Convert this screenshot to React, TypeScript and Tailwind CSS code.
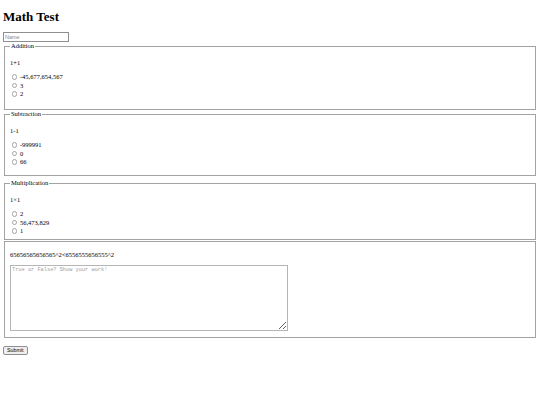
import React from 'react'

type Question = {
    legend: string
    prompt: string
    options: string[]
    box: string
}

const questions: Question[] = [
    { legend: 'Addition', prompt: '1+1', options: ['-45,677,654,567', '3', '2'], box: 'h-[68px]' },
    { legend: 'Subtraction', prompt: '1-1', options: ['-999991', '0', '66'], box: 'h-[66px]' },
    { legend: 'Multiplication', prompt: '1×1', options: ['2', '56,473,829', '1'], box: 'mt-[3px]' },
]

const QuestionBox = ({ q, idx }: { q: Question; idx: number }) => (
    <fieldset className={`mx-[1px] border border-[#a3a3a3] px-[5px] pt-[2.3px] pb-[4px] ${q.box}`}>
        <legend className='px-[1px] leading-[7.5px]'>{q.legend}</legend>
        <p className='my-[6.5px] leading-[7.5px]'>{q.prompt}</p>
        {q.options.map((opt) => (
            <label key={opt} className='flex h-[8.5px] items-center leading-[7.5px]'>
                <input
                    type='radio'
                    name={`q${idx}`}
                    className='ml-[2px] mr-[2.5px] h-[5.4px] w-[5.4px] appearance-none rounded-full border border-[#a5a5a5] bg-white'
                />
                <span>{opt}</span>
            </label>
        ))}
    </fieldset>
)

const App = () => {
    return (
        <div className="min-h-[405px] bg-white px-[3px] font-['Liberation_Serif',serif] text-[6.5px] text-black">
            <h1 className='my-[8.7px] text-[13px] font-bold leading-[15px]'>Math Test</h1>
            <input
                type='text'
                placeholder='Name'
                className="block h-[10px] w-[66px] border border-[#8f8f8f] px-[1px] font-['Liberation_Sans',sans-serif] text-[5.5px] placeholder:text-[#8a8a8a]"
            />
            {questions.map((q, i) => (
                <QuestionBox key={q.legend} q={q} idx={i} />
            ))}
            <fieldset className='mx-[1px] mt-[1px] border border-[#a3a3a3] px-[5px] pt-[2.3px] pb-[4px]'>
                <p className='my-[6.5px] leading-[7.5px]'>65656565656565^2&lt;6556555656555^2</p>
                <textarea
                    placeholder='True or False? Show your work!'
                    className="block h-[66px] w-[278px] border border-[#b5b5b5] px-[1px] py-[1px] font-['Liberation_Mono',monospace] text-[5.3px] leading-[6.5px] placeholder:text-[#a0a0a0]"
                />
                <div className='h-[2px]' />
            </fieldset>
            <button className="mt-[8px] h-[9px] w-[24.5px] rounded-[2px] border border-[#8f8f8f] bg-[#efefef] font-['Liberation_Sans',sans-serif] text-[5.3px] leading-[7px]">
                Submit
            </button>
        </div>
    )
}

export default App
